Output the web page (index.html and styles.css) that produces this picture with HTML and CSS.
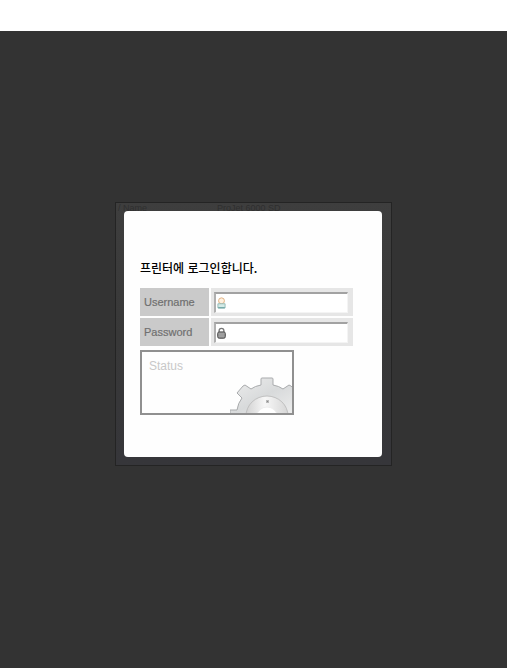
FILE: index.html
```
<!DOCTYPE html>
<html lang="ko">
<head>
<meta charset="utf-8">
<title>프린터 로그인</title>
<link rel="stylesheet" href="styles.css">
</head>
<body>
<main class="overlay">
  <div class="frame">
    <span class="ghost ghost-name" aria-hidden="true">/ Name</span>
    <span class="ghost ghost-model" aria-hidden="true">ProJet 6000 SD</span>
    <form class="dialog">
      <h1 class="title">프린터에 로그인합니다.</h1>
      <div class="fields">
        <label class="label" for="username">Username</label>
        <div class="cell">
          <div class="box">
            <svg class="icon" viewBox="0 0 8 11" aria-hidden="true">
              <circle cx="4" cy="3.5" r="2.7" fill="#fff1e0" stroke="#dfb184" stroke-width=".9"/>
              <path d="M.7 10V6.2H7.3V10z" fill="#d5ebe7" stroke="#8fb6b2" stroke-width=".8"/>
              <path d="M1 9.9h6" stroke="#639d9e"/>
            </svg>
            <input class="input" id="username" type="text">
          </div>
        </div>
        <label class="label" for="password">Password</label>
        <div class="cell">
          <div class="box">
            <svg class="icon" viewBox="0 0 8 11" aria-hidden="true">
              <path d="M1.8 5V3.4a2.2 2.2 0 0 1 4.4 0V5" fill="none" stroke="#777" stroke-width="1.2"/>
              <rect x=".5" y="4.5" width="7" height="5.8" rx="1.4" fill="#949494" stroke="#4c4c4c" stroke-width=".9"/>
              <path d="M1.5 6.4h5M1.5 8.3h5" stroke="#b8b8b8" stroke-width=".6"/>
            </svg>
            <input class="input" id="password" type="password">
          </div>
        </div>
      </div>
      <section class="status">
        <h2 class="status-title">Status</h2>
        <svg class="gear" viewBox="0 0 62 36" aria-hidden="true">
          <defs>
            <linearGradient id="rim" x1="0" y1="0" x2="1" y2="1">
              <stop offset="0" stop-color="#eee"/>
              <stop offset=".5" stop-color="#d8dadb"/>
              <stop offset="1" stop-color="#efefef"/>
            </linearGradient>
            <linearGradient id="hub" x1="0" y1="0" x2="1" y2="0">
              <stop offset="0" stop-color="#d2d2d2"/>
              <stop offset=".45" stop-color="#f7f7f7"/>
              <stop offset="1" stop-color="#d6d6d6"/>
            </linearGradient>
          </defs>
          <path d="M0 39V33H7Q8 26 12 21L7 16 13 9 15 8 21 12Q25 9 31 8V2Q31 1 32 1H42Q43 1 43 2V8Q49 9 53 12L59 8 61 9 66 14V39z" fill="url(#rim)" stroke="#a9abad"/>
          <path d="M16 39a21 20 0 0 1 42 0z" fill="url(#hub)" stroke="#bcbcbc" stroke-width=".9"/>
          <path d="M27 39a10 9 0 0 1 20 0z" fill="#fff" stroke="#eee"/>
          <path d="M36 23h3v3h-3z" fill="#b9b9b9"/>
          <path d="M37 24h1v1h-1z" fill="#888"/>
        </svg>
      </section>
    </form>
  </div>
</main>
</body>
</html>
```
FILE: styles.css
```
* {
  box-sizing: border-box;
}

body {
  margin: 0;
  padding-top: 31px;
  min-height: 100vh;
  display: flex;
  flex-direction: column;
  background: #fff;
  font-family: "Liberation Sans", "Noto Sans CJK KR", sans-serif;
}

.overlay {
  flex: 1;
  display: flex;
  justify-content: center;
  align-items: flex-start;
  padding: 171px 16px 16px;
  background: #333;
}

.frame {
  position: relative;
  width: 100%;
  max-width: 277px;
  padding: 8px 9px 8px 8px;
  border: 1px solid #242424;
  background: linear-gradient(#3e3e3e, #383838 50%, #36363a);
}

.ghost {
  position: absolute;
  top: 0;
  font-size: 9px;
  line-height: 10px;
  color: #2f2f2f;
}

.ghost-name {
  left: 2px;
}

.ghost-model {
  left: 101px;
}

.dialog {
  position: relative;
  padding: 48px 29px 42px 16px;
  border-radius: 4px;
  background: #fefefe;
}

.title {
  margin: 0 0 11px;
  font-family: "Noto Sans CJK KR", sans-serif;
  font-size: 12px;
  line-height: 18px;
  font-weight: 500;
  color: #000;
}

.fields {
  display: grid;
  grid-template-columns: 69px minmax(0, 1fr);
  gap: 2px;
}

.label {
  padding-left: 4px;
  font-size: 11px;
  line-height: 28px;
  color: #707070;
  background: #cacaca;
  -webkit-text-stroke: 0.2px #707070;
}

.cell {
  padding: 4px 5px 3px 3px;
  background: #e6e6e6;
}

.box {
  display: flex;
  align-items: center;
  height: 21px;
  padding-left: 1px;
  border: 1px solid #f4f4f4;
  border-top: 2px solid #a2a2a2;
  border-left: 2px solid #b0b0b0;
  background: #fff;
}

.icon {
  flex: none;
  width: 9px;
  height: 12px;
}

.input {
  flex: 1;
  min-width: 0;
  height: 18px;
  padding: 0 3px;
  border: 0;
  outline: 0;
  background: transparent;
  font: 11px "Liberation Sans", sans-serif;
}

.status {
  position: relative;
  width: 154px;
  height: 65px;
  margin: 4px 0 0;
  padding: 6px 7px;
  overflow: hidden;
  border: 2px solid #909090;
  background: #fefefe;
}

.status-title {
  margin: 0;
  font-size: 12px;
  line-height: 16px;
  font-weight: 400;
  color: #c8c8c8;
}

.gear {
  position: absolute;
  right: 0;
  bottom: 0;
  width: 62px;
  height: 36px;
}
```
